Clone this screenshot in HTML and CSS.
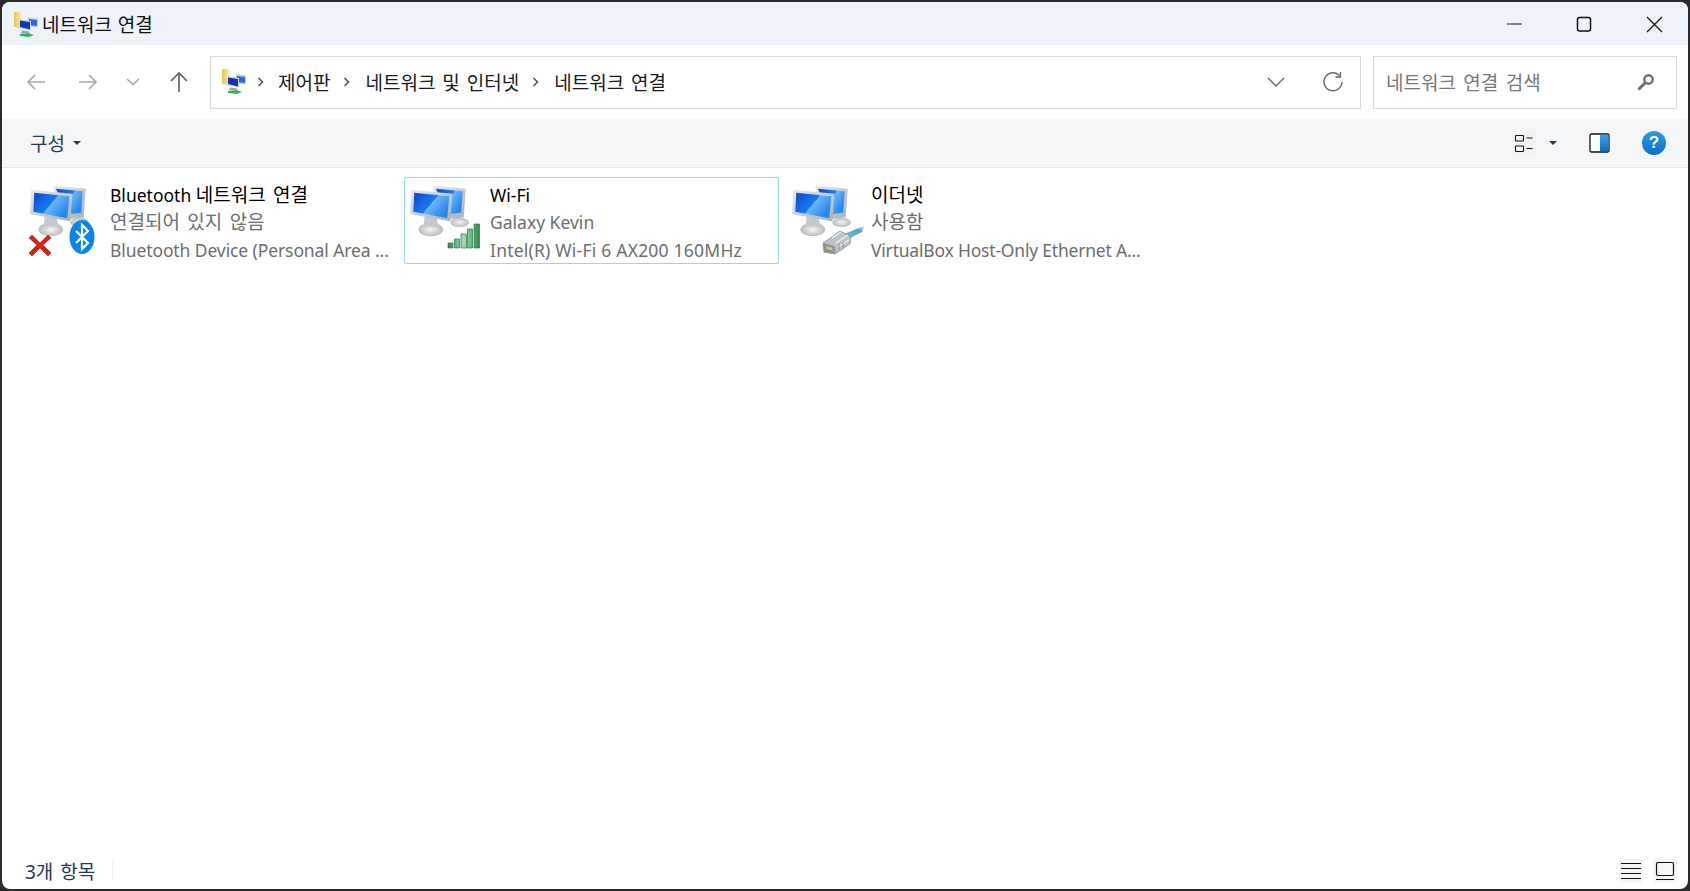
FILE: index.html
```html
<!DOCTYPE html>
<html lang="ko">
<head>
<meta charset="utf-8">
<title>네트워크 연결</title>
<link rel="stylesheet" href="styles.css">
</head>
<body>
<div class="window">
  <header class="titlebar">
    <svg class="app-icon" width="24" height="26" viewBox="0 0 24 26">
      <defs>
        <linearGradient id="fold" x1="0" x2="1" y1="0" y2="0"><stop offset="0" stop-color="#e8c455"/><stop offset="1" stop-color="#fbeeb0"/></linearGradient>
        <g id="mini">
          <path d="M0 0h6l2 2v16l-6-3H0z" fill="url(#fold)"/>
          <path d="M14 5l10 1.500v9l-10-1z" fill="#c3d4ea"/>
          <path d="M15 7l8 1v6l-8-.8z" fill="#2f66d8"/>
          <path d="M5 7l12 2v10L5 16z" fill="#d4dce8"/>
          <path d="M6 8.500l10 1.500v7.500L6 15z" fill="#0f36b4"/>
          <path d="M6 22l8-1 6 2-5 2-9-1z" fill="#33b25a"/>
          <path d="M8 18.500l7 1 1 2.500-9-1z" fill="#9aa4b2"/>
        </g>
      </defs>
      <use href="#mini"/>
    </svg>
    <span class="title-text">네트워크 연결</span>
    <div class="win-controls">
      <svg class="win-btn" width="70" height="20" viewBox="-2 0 70 20"><path d="M27 10h15" stroke="#111" stroke-width="1.200"/></svg>
      <svg class="win-btn" width="70" height="20" viewBox="-2 0 70 20"><rect x="27.500" y="3.500" width="13" height="13.500" rx="2" fill="none" stroke="#111" stroke-width="1.500"/></svg>
      <svg class="win-btn" width="70" height="20" viewBox="-2 0 70 20"><path d="M27 3l15 15M42 3L27 18" stroke="#111" stroke-width="1.200"/></svg>
    </div>
  </header>

  <div class="navbar">
    <div class="nav-buttons">
      <svg width="20" height="20" viewBox="0 0 20 20"><path d="M19 10H2M9 3l-7 7 7 7" fill="none" stroke="#a6a6a6" stroke-width="1.600"/></svg>
      <svg width="20" height="20" viewBox="0 0 20 20"><path d="M1 10h17M11 3l7 7-7 7" fill="none" stroke="#a6a6a6" stroke-width="1.600"/></svg>
      <svg width="14" height="10" viewBox="0 0 14 10"><path d="M1 2l6 5.500L13 2" fill="none" stroke="#a6a6a6" stroke-width="1.600"/></svg>
      <svg width="20" height="22" viewBox="0 0 20 22"><path d="M10 21V2M2 10l8-8 8 8" fill="none" stroke="#666" stroke-width="1.700"/></svg>
    </div>
    <div class="address">
      <svg class="crumb-icon" width="24" height="26" viewBox="0 0 24 26"><use href="#mini"/></svg>
      <svg class="sep" width="8" height="10" viewBox="0 0 8 10"><path d="M1.500 1l4 4-4 4" fill="none" stroke="#555" stroke-width="1.600"/></svg>
      <span class="crumb">제어판</span>
      <svg class="sep" width="8" height="10" viewBox="0 0 8 10"><path d="M1.500 1l4 4-4 4" fill="none" stroke="#555" stroke-width="1.600"/></svg>
      <span class="crumb">네트워크 및 인터넷</span>
      <svg class="sep" width="8" height="10" viewBox="0 0 8 10"><path d="M1.500 1l4 4-4 4" fill="none" stroke="#555" stroke-width="1.600"/></svg>
      <span class="crumb">네트워크 연결</span>
      <svg class="addr-chevron" width="18" height="10" viewBox="0 0 18 10"><path d="M1 1l8 8 8-8" fill="none" stroke="#666" stroke-width="1.300"/></svg>
      <svg class="addr-refresh" width="22" height="22" viewBox="0 0 22 22"><path d="M17.500 4.500A9 9 0 1 0 20 11" fill="none" stroke="#666" stroke-width="1.400"/><path d="M18.500 1v5h-5" fill="none" stroke="#666" stroke-width="1.400"/></svg>
    </div>
    <div class="search">
      <span class="search-text">네트워크 연결 검색</span>
      <svg width="18" height="18" viewBox="0 0 18 18"><circle cx="11.500" cy="6.500" r="4.200" fill="none" stroke="#6e6e6e" stroke-width="2.400"/><path d="M8 10l-6.500 6.500" stroke="#6e6e6e" stroke-width="3"/></svg>
    </div>
  </div>

  <div class="toolbar">
    <span class="organize">구성</span>
    <span class="caret"></span>
    <div class="toolbar-right">
      <span class="view-btn">
        <svg width="24" height="24" viewBox="0 0 24 24"><rect x="3.500" y="4.500" width="8" height="5.500" rx=".8" fill="none" stroke="#111" stroke-width="1.100"/><rect x="3.500" y="15" width="8" height="5.500" rx=".8" fill="none" stroke="#111" stroke-width="1.100"/><path d="M14.500 7h6M14.500 17.500h6" stroke="#111" stroke-width="1.100"/></svg>
      </span>
      <span class="caret caret-view"></span>
      <svg class="pane-icon" width="21" height="20" viewBox="0 0 21 20">
        <defs><linearGradient id="pane" x1="0" x2="0" y1="0" y2="1"><stop offset="0" stop-color="#35a3ea"/><stop offset="1" stop-color="#0a6fc8"/></linearGradient></defs>
        <rect x="1" y="1" width="19" height="18" rx="1.500" fill="#fff" stroke="#111" stroke-width="1.300"/>
        <rect x="11" y="1.700" width="8.300" height="16.600" fill="url(#pane)"/>
      </svg>
      <span class="help">?</span>
    </div>
  </div>

  <main class="content">
    <div class="conn">
      <svg class="conn-icon" width="80" height="84" viewBox="1 1 80 84">
        <defs>
          <linearGradient id="scr" x1="0" x2="1" y1="0" y2="0.600"><stop offset="0" stop-color="#0a46d0"/><stop offset="0.550" stop-color="#1a7cf0"/><stop offset="0.560" stop-color="#6db4f8"/><stop offset="1" stop-color="#2088f0"/></linearGradient>
          <linearGradient id="frame" x1="0" x2="1" y1="0" y2="1"><stop offset="0" stop-color="#e8ecef"/><stop offset="1" stop-color="#a9afb4"/></linearGradient>
          <radialGradient id="foot"><stop offset="0" stop-color="#f4f4f4"/><stop offset="1" stop-color="#b9bcbe"/></radialGradient>
          <linearGradient id="bar" x1="0" x2="1" y1="0" y2="0"><stop offset="0" stop-color="#2f8a4e"/><stop offset="0.500" stop-color="#a8dcb4"/><stop offset="1" stop-color="#2f8a4e"/></linearGradient>
          <linearGradient id="cable" x1="0" x2="1" y1="1" y2="0"><stop offset="0" stop-color="#8fb4c4"/><stop offset="0.700" stop-color="#4fa6c8"/><stop offset="1" stop-color="#c8e4f0"/></linearGradient>
          <filter id="soft" x="-5%" y="-5%" width="110%" height="110%"><feGaussianBlur stdDeviation="0.350"/></filter>
          <g id="net" transform="translate(0 -0.500) scale(1.030 1.020)" filter="url(#soft)">
            <ellipse cx="54" cy="44" rx="9" ry="4.500" fill="url(#foot)"/>
            <path d="M28 8l32 3-2 28-14 2-8-3z" fill="url(#frame)"/>
            <path d="M31 11l26 2.500-1.500 21-13 1.500z" fill="url(#scr)"/>
            <ellipse cx="26" cy="51" rx="12" ry="6.500" fill="url(#foot)"/>
            <path d="M20 38h11l3 10H19z" fill="#c6c9cb"/>
            <path d="M7 12l40 4-2 27-39-7z" fill="url(#frame)"/>
            <path d="M10 15l34 3.500-2 21.500-33-6.500z" fill="url(#scr)"/>
          </g>
        </defs>
        <use href="#net"/>
        <path d="M8 60l8 8 8-8 3 3-8 7 8 8-3 3-8-8-8 8-3-3 8-8-8-7z" transform="translate(0 -3)" fill="#d9201f" stroke="#a81414" stroke-width=".6" filter="url(#soft)"/>
        <ellipse cx="58" cy="59" rx="12.500" ry="17" fill="#0a84ea"/>
        <path d="M52 53l12 12-6 6V47l6 6-12 12" fill="none" stroke="#fff" stroke-width="2.200"/>
      </svg>
      <div class="conn-text">
        <div class="conn-name">Bluetooth <span class="ko">네트워크 연결</span></div>
        <div class="conn-sub ko">연결되어 있지 않음</div>
        <div class="conn-sub tight">Bluetooth Device (Personal Area ...</div>
      </div>
    </div>

    <div class="conn conn-selected">
      <svg class="conn-icon" width="80" height="84" viewBox="1 1 80 84">
        <use href="#net"/>
        <path d="M44 65h5v5h-5zM50.500 61h5v9h-5zM57 56h5.500v14H57zM63.500 51h5v19h-5zM70 46h5.500v24H70z" fill="url(#bar)" stroke="#2c7a48" stroke-width=".7" filter="url(#soft)"/>
      </svg>
      <div class="conn-text">
        <div class="conn-name">Wi-Fi</div>
        <div class="conn-sub">Galaxy Kevin</div>
        <div class="conn-sub wide">Intel(R) Wi-Fi 6 AX200 160MHz</div>
      </div>
    </div>

    <div class="conn">
      <svg class="conn-icon icon-ether" width="80" height="84" viewBox="1 1 80 84">
        <use href="#net"/>
        <g filter="url(#soft)">
          <path d="M58 56l20-8-2 6-14 7z" fill="url(#cable)"/>
          <path d="M37 65l17-12 11 6-1 7-15 10-11-2z" fill="#bcc3c9" stroke="#7d858c" stroke-width=".7"/>
          <path d="M37 65l11 3 1 8-11-2z" fill="#8a9299"/>
          <path d="M40 68l6 1.500.5 3-6-1.500z" fill="#d5c878"/>
          <path d="M50 65l12-8M52 69l11-7M46 60l9-6" stroke="#eef1f3" stroke-width="1.400"/>
          <path d="M49 69v6M53 66v6M57 64v6" stroke="#7d858c" stroke-width=".8"/>
        </g>
      </svg>
      <div class="conn-text text-ether">
        <div class="conn-name ko">이더넷</div>
        <div class="conn-sub ko">사용함</div>
        <div class="conn-sub tight-more">VirtualBox Host-Only Ethernet A...</div>
      </div>
    </div>
  </main>

  <footer class="statusbar">
    <span class="count">3개 항목</span>
    <span class="status-sep"></span>
    <div class="status-right">
      <span class="status-btn"><svg width="24" height="24" viewBox="0 0 24 24"><path d="M2 4.500h20M2 9.500h20M2 14.500h20M2 19.500h20" stroke="#111" stroke-width="1.200"/></svg></span>
      <span class="status-btn"><svg width="24" height="24" viewBox="0 0 24 24"><rect x="3.500" y="3.500" width="17" height="13" rx="1.500" fill="none" stroke="#111" stroke-width="1.200"/><path d="M3 20.500h18" stroke="#111" stroke-width="1.200"/></svg></span>
    </div>
  </footer>
</div>
</body>
</html>
```
FILE: styles.css
```css
* { box-sizing: border-box; }
html, body { height: 100%; }
body {
  margin: 0;
  background: #2b2b2b;
  padding: 2px;
  font-family: "Noto Sans", "Noto Sans CJK KR", sans-serif;
  overflow: hidden;
}
svg { display: block; flex: none; }

.window {
  height: 100%;
  background: #fff;
  border-radius: 8px;
  overflow: hidden;
  display: flex;
  flex-direction: column;
}

.titlebar {
  height: 43px;
  flex: none;
  background: #eef3fa;
  display: flex;
  align-items: center;
  padding-left: 12px;
}
.app-icon { margin-top: 2px; }
.title-text { margin-left: 4px; font-size: 19px; color: #111; white-space: nowrap; word-spacing: 1px; }
.win-controls { margin-left: auto; display: flex; }

.navbar {
  height: 74px;
  flex: none;
  display: flex;
  align-items: center;
  padding-right: 11px;
}
.nav-buttons {
  width: 208px;
  flex: none;
  display: flex;
  align-items: center;
  padding-left: 24px;
}
.nav-buttons svg:nth-child(2) { margin-left: 32px; }
.nav-buttons svg:nth-child(3) { margin-left: 28px; }
.nav-buttons svg:nth-child(4) { margin-left: 29px; }

.address {
  flex: 1;
  height: 53px;
  border: 1px solid #d9d9d9;
  display: flex;
  align-items: center;
  padding-left: 11px;
  padding-right: 16px;
}
.sep { margin-left: 11px; margin-right: 13px; }
.crumb { font-size: 19px; color: #1a1a1a; white-space: nowrap; word-spacing: 2px; }
.crumb + .sep { margin-left: 13px; margin-right: 14px; }
.addr-chevron { margin-left: auto; }
.addr-refresh { margin-left: 37px; }

.search {
  width: 304px;
  flex: none;
  margin-left: 12px;
  height: 53px;
  border: 1px solid #d9d9d9;
  display: flex;
  align-items: center;
  justify-content: space-between;
  padding: 0 21px 0 12px;
}
.search-text { font-size: 19px; color: #777; white-space: nowrap; word-spacing: 2.500px; }

.toolbar {
  height: 49px;
  flex: none;
  background: #f5f6f8;
  border-bottom: 1px solid #e6e6e6;
  display: flex;
  align-items: center;
  padding-left: 28px;
}
.organize { font-size: 19px; color: #1e395b; }
.caret {
  width: 0;
  height: 0;
  margin-left: 8px;
  border-left: 4px solid transparent;
  border-right: 4px solid transparent;
  border-top: 4px solid #1e395b;
}
.toolbar-right { margin-left: auto; display: flex; align-items: center; padding-right: 22px; }
.view-btn { background: #f1f2f3; display: block; }
.caret-view { margin-left: 13px; }
.pane-icon { margin-left: 32px; }
.help {
  width: 24px;
  height: 24px;
  margin-left: 32px;
  border-radius: 50%;
  background: linear-gradient(#2a9cea, #0a70cc);
  color: #fff;
  font: bold 17px/24px "Liberation Sans", sans-serif;
  text-align: center;
}

.content {
  flex: 1;
  display: flex;
  align-items: flex-start;
  gap: 5px;
  padding: 9px 0 0 22px;
}
.conn {
  width: 375px;
  height: 87px;
  flex: none;
  border: 1px solid transparent;
  border-radius: 2px;
  display: flex;
}
.conn-selected { border-color: #99d1ff; }
.conn-icon { margin-top: 1px; }
.conn-text { margin-left: 5px; padding-top: 3.500px; min-width: 0; }
.icon-ether { margin-left: 2px; }
.text-ether { margin-left: 4px; }
.conn-name, .conn-sub { font-size: 17.500px; line-height: 27.500px; white-space: nowrap; }
.conn-name { color: #000; }
.conn-sub { color: #6d6d6d; }
.ko { font-size: 19px; word-spacing: 2.500px; }
.conn-name .ko { line-height: 1; }
.tight { letter-spacing: -0.100px; }
.tight-more { letter-spacing: -0.200px; }
.wide { letter-spacing: 0.220px; }

.statusbar {
  height: 45px;
  flex: none;
  display: flex;
  align-items: center;
  padding: 9px 0 0 23px;
}
.count { font-size: 19px; color: #1e395b; word-spacing: 2px; }
.status-sep { width: 1px; height: 18px; margin-left: 17px; background: #ececec; }
.status-right { margin-left: auto; display: flex; gap: 10px; padding-right: 11px; }
.status-btn { background: #f6f6f6; border-radius: 3px; display: block; }
```
